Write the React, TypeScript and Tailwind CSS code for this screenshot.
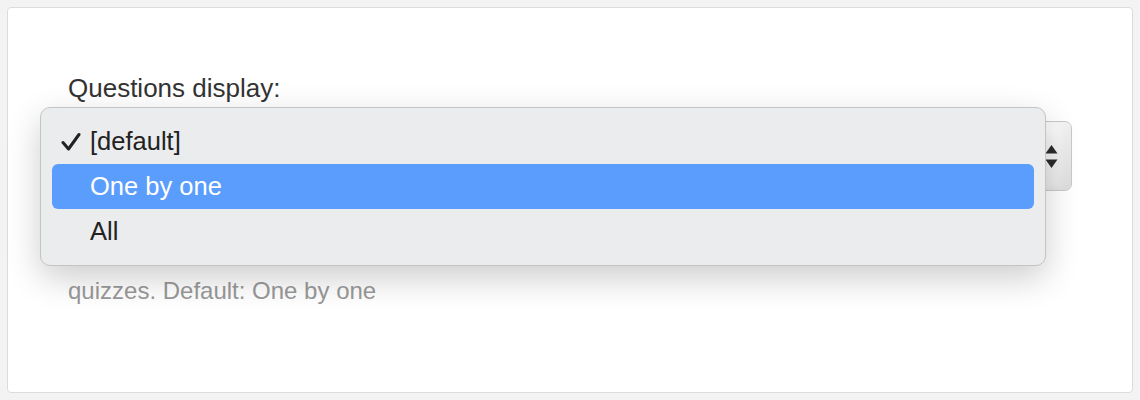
import React from "react";

const options = ["[default]", "One by one", "All"];

function CheckIcon() {
  return (
    <svg width="20" height="19" viewBox="0 0 20 19" className="absolute left-[9px] top-1/2 -translate-y-1/2">
      <path d="M2 10 L7.5 16.5 L18 2" fill="none" stroke="#222" strokeWidth="3" strokeLinecap="round" strokeLinejoin="round" />
    </svg>
  );
}

function App() {
  const selected = 0;
  const highlighted = 1;

  return (
    <div
      className="min-h-[400px] bg-[#f3f3f3] p-[7px]"
      style={{ fontFamily: '"Liberation Sans", Arial, sans-serif' }}
    >
      <div className="h-[386px] rounded-[4px] border border-[#dcdcdc] bg-white px-[60px] pt-[65px]">
        <label className="block text-[26px] leading-[30px] text-[#333]">Questions display:</label>

        <div className="relative mt-[18px]">
          {/* the native select behind the open menu */}
          <div className="flex h-[70px] items-center justify-end rounded-[7px] border border-[#c9c9c9] bg-gradient-to-b from-[#fdfdfd] to-[#e9e9e9] pr-[13px] shadow-[inset_-8px_0_10px_rgba(0,0,0,0.05)]">
            <svg width="13" height="25" viewBox="0 0 13 25">
              <path d="M6.5 1 L12.5 9.5 L0.5 9.5 Z" fill="#2b2b2b" />
              <path d="M6.5 24 L12.5 15.5 L0.5 15.5 Z" fill="#2b2b2b" />
            </svg>
          </div>

          <p className="mt-[85px] text-[24px] leading-[30px] text-[#999]">quizzes. Default: One by one</p>

          {/* open menu */}
          <div className="absolute -left-[28px] -top-[14px] right-[26px] rounded-[10px] border border-[#c4c4c4] bg-[#ebeced] px-[11px] py-[11px] shadow-[0_12px_34px_rgba(0,0,0,0.2)]">
            {options.map((opt, i) => (
              <div
                key={opt}
                className={
                  "relative flex h-[45px] items-center rounded-[6px] pl-[38px] text-[25.5px] " +
                  (i === highlighted ? "bg-[#5b9dfd] text-white" : "text-[#222]")
                }
              >
                {i === selected && <CheckIcon />}
                {opt}
              </div>
            ))}
          </div>
        </div>
      </div>
    </div>
  );
}

export default App;
